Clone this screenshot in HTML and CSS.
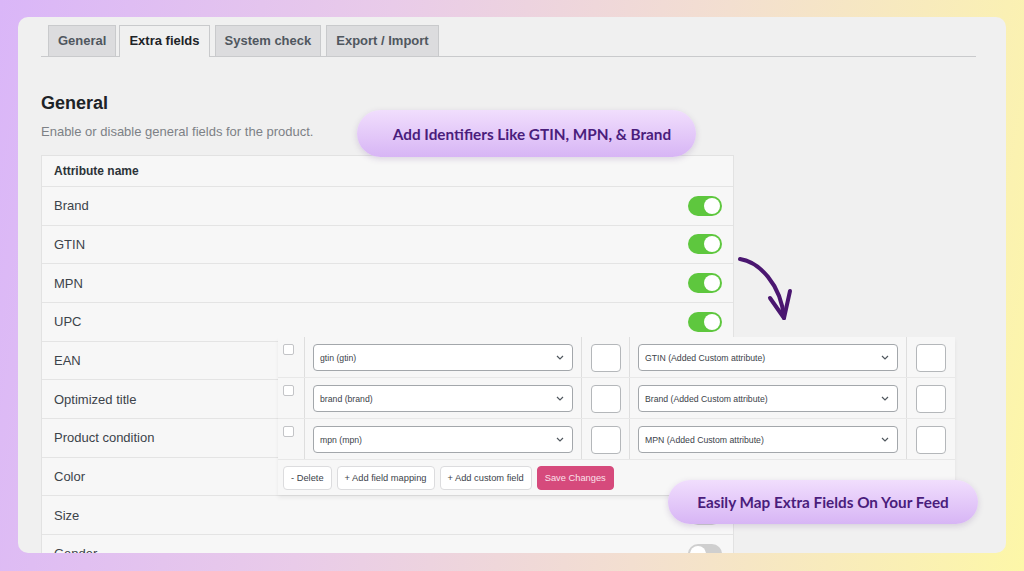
FILE: index.html
```html
<!DOCTYPE html>
<html lang="en">
<head>
  <meta charset="UTF-8">
  <meta name="viewport" content="width=device-width, initial-scale=1.0">
  <title>Extra fields</title>
  <link rel="stylesheet" href="styles.css">
</head>
<body>

<div class="frame">
  <div class="card">

    <!-- Tabs -->
    <nav class="tabs">
      <a class="tab">General</a>
      <a class="tab active">Extra fields</a>
      <a class="tab">System check</a>
      <a class="tab">Export / Import</a>
    </nav>

    <h2 class="title">General</h2>
    <p class="subtitle">Enable or disable general fields for the product.</p>

    <!-- Attribute table -->
    <div class="attr-table">
      <div class="attr-head">Attribute name</div>
      <div class="attr-row"><span>Brand</span><span class="toggle on"></span></div>
      <div class="attr-row"><span>GTIN</span><span class="toggle on"></span></div>
      <div class="attr-row"><span>MPN</span><span class="toggle on"></span></div>
      <div class="attr-row"><span>UPC</span><span class="toggle on"></span></div>
      <div class="attr-row"><span>EAN</span><span class="toggle on"></span></div>
      <div class="attr-row"><span>Optimized title</span><span class="toggle on"></span></div>
      <div class="attr-row"><span>Product condition</span><span class="toggle on"></span></div>
      <div class="attr-row"><span>Color</span><span class="toggle"></span></div>
      <div class="attr-row"><span>Size</span><span class="toggle"></span></div>
      <div class="attr-row"><span>Gender</span><span class="toggle"></span></div>
    </div>

    <!-- Field mapping panel -->
    <div class="mapping">
      <div class="map-row">
        <div class="cell cell-check"><span class="checkbox"></span></div>
        <div class="cell cell-select">
          <div class="select">gtin (gtin)<svg width="8" height="5" viewBox="0 0 8 5"><path d="M1 1l3 3 3-3" fill="none" stroke="#50575e" stroke-width="1.2"/></svg></div>
        </div>
        <div class="cell cell-input"><span class="input"></span></div>
        <div class="cell cell-select">
          <div class="select">GTIN (Added Custom attribute)<svg width="8" height="5" viewBox="0 0 8 5"><path d="M1 1l3 3 3-3" fill="none" stroke="#50575e" stroke-width="1.2"/></svg></div>
        </div>
        <div class="cell cell-input last"><span class="input"></span></div>
      </div>
      <div class="map-row">
        <div class="cell cell-check"><span class="checkbox"></span></div>
        <div class="cell cell-select">
          <div class="select">brand (brand)<svg width="8" height="5" viewBox="0 0 8 5"><path d="M1 1l3 3 3-3" fill="none" stroke="#50575e" stroke-width="1.2"/></svg></div>
        </div>
        <div class="cell cell-input"><span class="input"></span></div>
        <div class="cell cell-select">
          <div class="select">Brand (Added Custom attribute)<svg width="8" height="5" viewBox="0 0 8 5"><path d="M1 1l3 3 3-3" fill="none" stroke="#50575e" stroke-width="1.2"/></svg></div>
        </div>
        <div class="cell cell-input last"><span class="input"></span></div>
      </div>
      <div class="map-row">
        <div class="cell cell-check"><span class="checkbox"></span></div>
        <div class="cell cell-select">
          <div class="select">mpn (mpn)<svg width="8" height="5" viewBox="0 0 8 5"><path d="M1 1l3 3 3-3" fill="none" stroke="#50575e" stroke-width="1.2"/></svg></div>
        </div>
        <div class="cell cell-input"><span class="input"></span></div>
        <div class="cell cell-select">
          <div class="select">MPN (Added Custom attribute)<svg width="8" height="5" viewBox="0 0 8 5"><path d="M1 1l3 3 3-3" fill="none" stroke="#50575e" stroke-width="1.2"/></svg></div>
        </div>
        <div class="cell cell-input last"><span class="input"></span></div>
      </div>
      <div class="map-actions">
        <button class="btn">- Delete</button>
        <button class="btn">+ Add field mapping</button>
        <button class="btn">+ Add custom field</button>
        <button class="btn btn-save">Save Changes</button>
      </div>
    </div>

    <!-- Callouts -->
    <div class="pill pill-top">Add Identifiers Like GTIN, MPN, &amp; Brand</div>
    <div class="pill pill-bottom">Easily Map Extra Fields On Your Feed</div>

    <svg class="arrow" width="62" height="76" viewBox="0 0 62 76">
      <path d="M5 9 C 24 12, 46 34, 49 68" fill="none" stroke="#4a1670" stroke-width="4" stroke-linecap="round"/>
      <path d="M35 48 L49 68 L55 41" fill="none" stroke="#4a1670" stroke-width="4" stroke-linecap="round" stroke-linejoin="round"/>
    </svg>

  </div>
</div>

</body>
</html>
```

FILE: styles.css
```css
/* Page */
body {
  margin: 0;
  height: 571px;
  overflow: hidden;
  font-family: "Liberation Sans", Arial, sans-serif;
  background: linear-gradient(100deg, #dab6f8 0%, #e9cbe9 35%, #f3dfd0 65%, #fdf7a8 100%);
}
.frame {
  padding: 17px 18px 0;
}
.card {
  position: relative;
  height: 536px;
  box-sizing: border-box;
  padding: 8px 30px 0 23px;
  background: #f0f0f0;
  border-radius: 10px;
  overflow: hidden;
}

/* Tabs */
.tabs {
  display: flex;
  align-items: flex-end;
  gap: 5px;
  height: 32px;
  box-sizing: border-box;
  padding-left: 7px;
  border-bottom: 1px solid #c9cacc;
}
.tab {
  height: 31px;
  box-sizing: border-box;
  padding: 0 9px;
  line-height: 29px;
  font-size: 13px;
  font-weight: bold;
  color: #50575e;
  background: #dcdcde;
  border: 1px solid #c9cacc;
  border-bottom: none;
}
.tab:first-child {
  margin-right: -2px;
}
.tab.active {
  height: 32px;
  margin-bottom: -1px;
  color: #1d2327;
  background: #f0f0f0;
}

/* Heading */
.title {
  margin: 35px 0 0;
  font-size: 18px;
  line-height: 23px;
  color: #1d2327;
}
.subtitle {
  margin: 8px 0 0;
  font-size: 13px;
  line-height: 18px;
  color: #7d8186;
}

/* Attribute table */
.attr-table {
  width: 691px;
  margin-top: 14px;
  background: #f7f7f7;
  border: 1px solid #e2e2e2;
}
.attr-head {
  height: 30px;
  line-height: 30px;
  padding-left: 12px;
  font-size: 12px;
  font-weight: bold;
  color: #2c3338;
}
.attr-row {
  display: flex;
  align-items: center;
  justify-content: space-between;
  height: 38.67px;
  box-sizing: border-box;
  padding: 0 11px 0 12px;
  border-top: 1px solid #e4e4e4;
  font-size: 13px;
  color: #3c434a;
}
.toggle {
  position: relative;
  width: 34px;
  height: 20px;
  border-radius: 10px;
  background: #cfcfcf;
}
.toggle::after {
  content: "";
  position: absolute;
  top: 2px;
  left: 2px;
  width: 16px;
  height: 16px;
  border-radius: 50%;
  background: #fff;
}
.toggle.on {
  background: #5ec73e;
}
.toggle.on::after {
  left: 16px;
}

/* Mapping panel */
.mapping {
  position: absolute;
  left: 260px;
  top: 320px;
  width: 677px;
  background: #f7f7f7;
  box-shadow: 0 3px 4px rgba(0, 0, 0, 0.06);
}
.map-row {
  display: grid;
  grid-template-columns: 27px 277px 48px 277px 48px;
  height: 41px;
  box-sizing: border-box;
  border-bottom: 1px solid #e8e8e8;
}
.cell {
  box-sizing: border-box;
  border-right: 1px solid #dedede;
}
.cell.last {
  border-right: none;
}
.cell-check {
  padding: 7px 5px;
}
.cell-select {
  padding: 7px 8px 0 8px;
}
.cell-input {
  padding: 7px 8px 0 9px;
}
.checkbox {
  display: block;
  width: 11px;
  height: 11px;
  box-sizing: border-box;
  background: #fff;
  border: 1px solid #c3c4c7;
  border-radius: 2px;
}
.select {
  display: flex;
  align-items: center;
  justify-content: space-between;
  height: 27px;
  box-sizing: border-box;
  padding: 0 8px 0 6px;
  background: #fff;
  border: 1px solid #a3a7ab;
  border-radius: 4px;
  font-size: 8.7px;
  color: #3c434a;
}
.input {
  display: block;
  width: 30px;
  height: 28px;
  box-sizing: border-box;
  background: #fff;
  border: 1px solid #b4b7ba;
  border-radius: 4px;
}
.map-actions {
  display: flex;
  gap: 5px;
  height: 35px;
  box-sizing: border-box;
  padding: 6px 5px 0;
}
.btn {
  height: 24px;
  padding: 0 7px;
  font-family: "Liberation Sans", Arial, sans-serif;
  font-size: 9.3px;
  color: #3c434a;
  background: #fff;
  border: 1px solid #dcdcde;
  border-radius: 4px;
}
.btn-save {
  color: #fbe1eb;
  background: #d64a7c;
  border-color: #d64a7c;
}

/* Callouts */
.pill {
  position: absolute;
  display: flex;
  align-items: center;
  justify-content: center;
  box-sizing: border-box;
  border-radius: 24px;
  background: linear-gradient(#f1defd, #d7b5f5);
  box-shadow: 0 2px 6px rgba(90, 50, 130, 0.18);
  font-family: Lato, "Open Sans", sans-serif;
  font-size: 15.3px;
  font-weight: bold;
  color: #4a1d7c;
}
.pill-top {
  left: 339px;
  top: 93px;
  width: 339px;
  height: 47px;
  padding-left: 11px;
}
.pill-bottom {
  left: 650px;
  top: 463px;
  width: 310px;
  height: 44px;
}
.arrow {
  position: absolute;
  left: 717px;
  top: 233px;
}
```
